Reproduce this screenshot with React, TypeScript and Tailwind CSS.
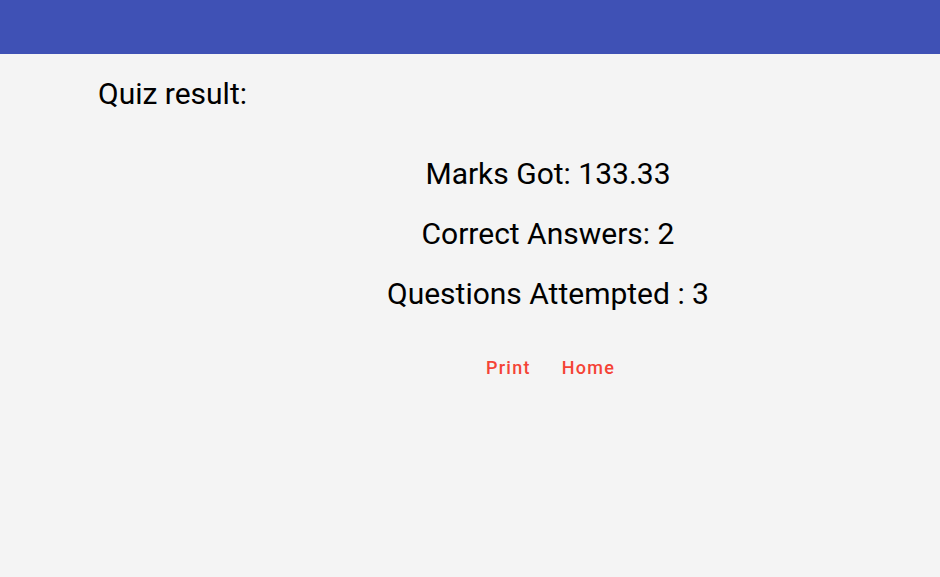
export default function App() {
    const stats = [
        { label: "Marks Got:", value: "133.33" },
        { label: "Correct Answers:", value: "2" },
        { label: "Questions Attempted :", value: "3" },
    ];

    return (
        <div className="min-h-[577px] bg-[#f4f4f4] font-['Roboto',sans-serif] text-black">
            {/* App bar */}
            <header className="h-[54px] bg-[#3f51b5]" />

            <main className="px-[98px]">
                <h1 className="pt-[22px] text-[30px] leading-[36px]">Quiz result:</h1>

                <div className="flex flex-col items-center pl-[58px] mt-[32px] mr-[-98px]">
                    {stats.map((s) => (
                        <p key={s.label} className="text-[30px] leading-[60px]">
                            {s.label} {s.value}
                        </p>
                    ))}

                    <div className="mt-[24px] ml-[5px] flex gap-[15px]">
                        <button className="px-2 py-1.5 text-[18px] font-medium tracking-[0.07em] text-[#f44336] rounded">
                            Print
                        </button>
                        <button className="px-2 py-1.5 text-[18px] font-medium tracking-[0.07em] text-[#f44336] rounded">
                            Home
                        </button>
                    </div>
                </div>
            </main>
        </div>
    );
}
